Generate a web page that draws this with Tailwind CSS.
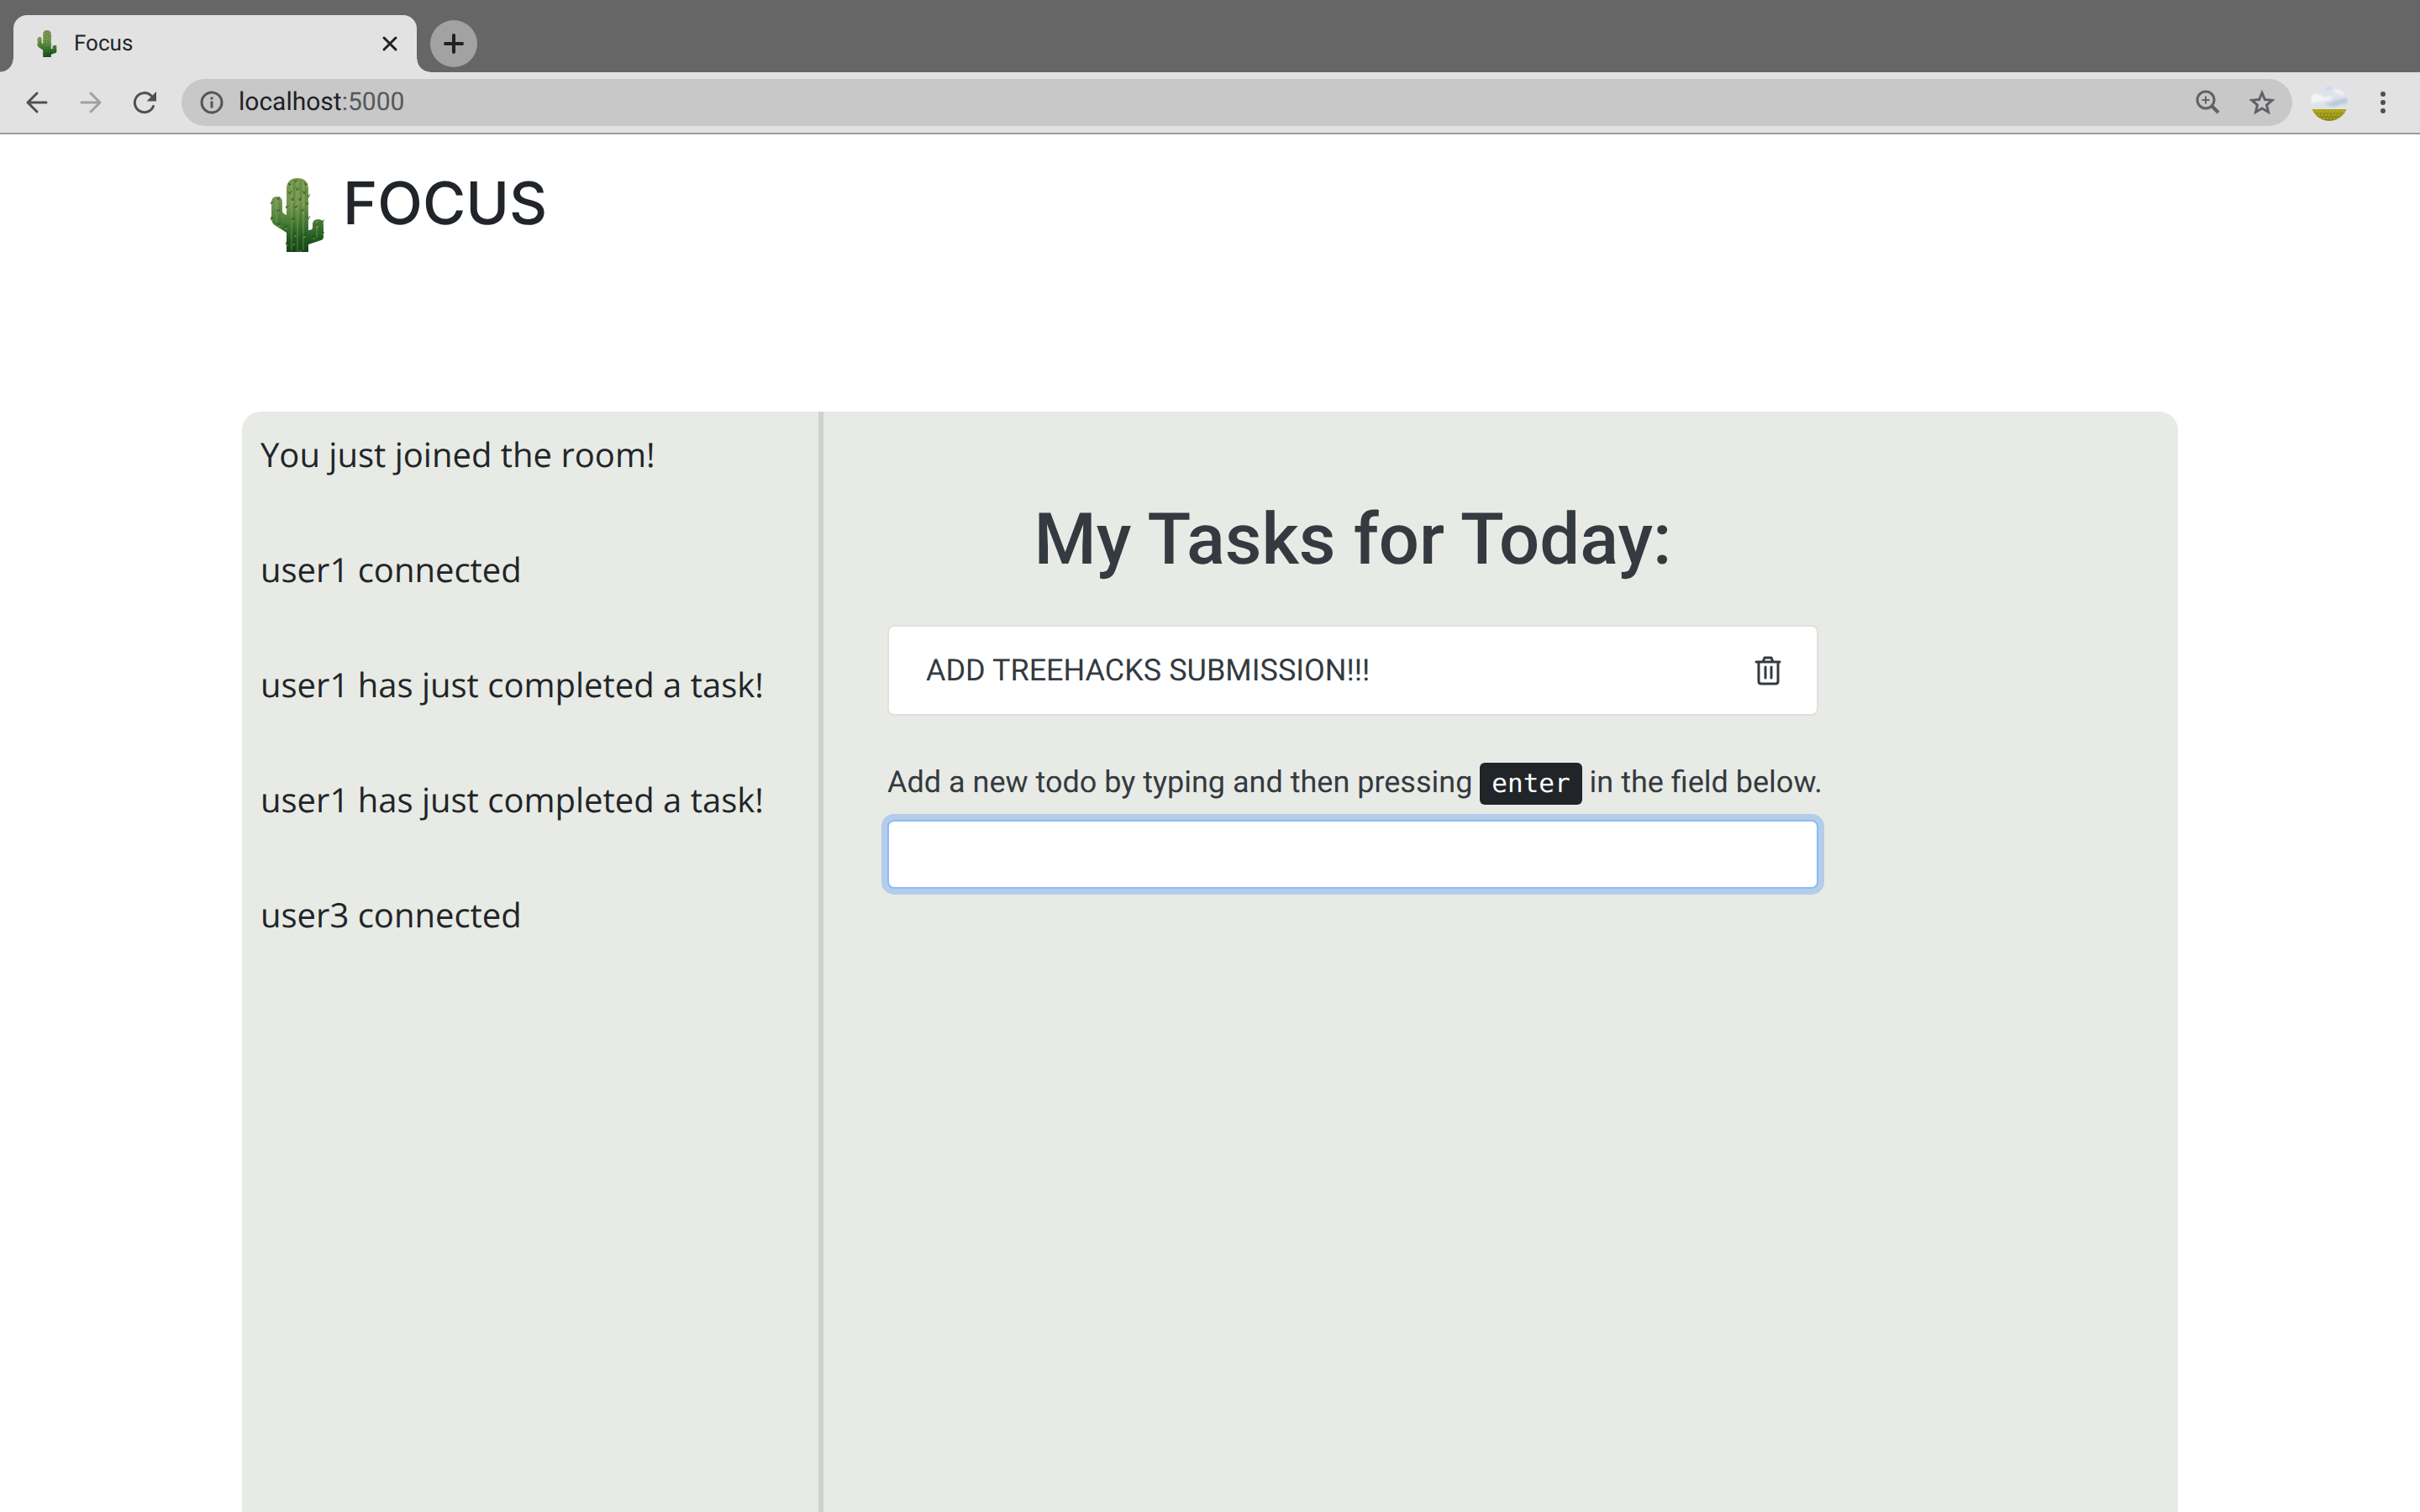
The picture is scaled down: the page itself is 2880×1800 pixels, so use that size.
<!DOCTYPE html>
<html lang="en">
<head>
    <meta charset="UTF-8">
    <meta name="viewport" content="width=device-width, initial-scale=1.0">
    <title>Focus</title>
    <script src="https://cdn.jsdelivr.net/npm/@tailwindcss/browser@4"></script>
</head>
<body class="min-h-screen flex flex-col bg-white text-[#212529] font-['Roboto',sans-serif] [text-rendering:geometricPrecision]">
    <!-- Shared cactus artwork -->
    <svg class="absolute w-0 h-0" aria-hidden="true">
        <defs>
            <linearGradient id="skin" x1="0" y1="0" x2="0" y2="88" gradientUnits="userSpaceOnUse">
                <stop offset="0" stop-color="#75984f"/>
                <stop offset=".35" stop-color="#729650"/>
                <stop offset=".6" stop-color="#477c37"/>
                <stop offset=".82" stop-color="#205a20"/>
                <stop offset="1" stop-color="#17431a"/>
            </linearGradient>
            <symbol id="cactus" viewBox="0 0 64 88">
                <path fill="url(#skin)" d="M19 88V65L5 56Q1 53 1 48V29Q1 22 7.500 22T14 29V39Q14 42 19 44V12Q20 0 32 0T45 12V62Q50 62 50 59V55Q50 49 56.500 49T63 55V70Q63 73 60 74L45 79V88Z"/>
                <path fill="none" stroke="#a9bf72" stroke-opacity=".3" stroke-width="1.500" d="M25 4V86M32 2V88M39 4V86M7 24V52M55 51V71"/>
                <path fill="none" stroke="#1c4a1c" stroke-opacity=".2" stroke-width="1.500" d="M28 3V88M36 3V88M42 8V88M11 26V56M59 52V72"/>
                <path fill="none" stroke="#24481f" stroke-opacity=".75" stroke-width="1" d="M21 6l2 3l1-3M28 2l2 3l2-3M40 5l2 4l2-3M30 11l2 4l2-4M21 16l2 3l2-4M38 15l2 4l2-4M44 19l1 4l2-4M24 24l2 3l1-4M33 24l2 3l1-4M18 33l1 3l2-3M28 33l2 3l2-4M42 29l2 3l1-3M25 47l2 4l1-4M36 37l2 3l2-4M44 45l1 4l2-4M27 65l2 3l1-4M38 66l2 3l2-4M25 75l2 4l1-4M33 84l2 3l1-3M18 76l1 4l1-3M7 23l2 3l2-4M0 28l1 3l2-3M7 37l2 4l2-4M0 46l1 4l1-4M8 53l2 3l2-3M17 56l1 4l2-4M53 54l2 3l2-4M61 50l1 3l2-4M62 64v3l2-3M50 68l1 4l2-4M43 74l2 4l2-4"/>
                <path fill="none" stroke="#b6bd32" stroke-width="1" stroke-linecap="round" d="M23 10h1M42 10h1M32 16h1M26 28h1M35 28h1M30 37h1M38 41h1M27 51h1M45 49h1M29 69h1M40 70h1M27 79h1M35 87h1M9 41h1M1 50h1M10 57h1M18 60h1M55 58h1M62 67h1M51 72h1M1 32h1M19 80h1M19 37h1M44 33h1"/>
            </symbol>
        </defs>
    </svg>

    <!-- Tab strip -->
    <div class="h-[86px] bg-[#666666] flex items-end">
        <div class="w-4 h-4 bg-[radial-gradient(circle_at_top_left,#666666_15px,#e2e2e2_16px)]"></div>
        <div class="w-[480px] h-[68px] rounded-t-2xl bg-[#e2e2e2] flex items-center pl-7 pr-5">
            <svg class="w-6 h-8 mr-5"><use href="#cactus"/></svg>
            <span class="flex-1 text-[26px] leading-8">Focus</span>
            <button class="w-6 h-6" aria-label="Close tab">
                <svg viewBox="0 0 24 24" fill="none" stroke="#202124" stroke-width="3" stroke-linecap="round"><path d="M5 5l14 14M19 5L5 19"/></svg>
            </button>
        </div>
        <div class="w-4 h-4 bg-[radial-gradient(circle_at_top_right,#666666_15px,#e2e2e2_16px)]"></div>
        <button class="w-14 h-14 mb-[6px] rounded-full bg-[#a2a2a2] flex items-center justify-center" aria-label="New tab">
            <svg class="w-6 h-6" viewBox="0 0 24 24" fill="none" stroke="#202020" stroke-width="4" stroke-linecap="round"><path d="M12 2v20M2 12h20"/></svg>
        </button>
    </div>

    <!-- Toolbar -->
    <div class="h-[74px] bg-[#e2e2e2] border-b-2 border-[#9b9b9b] flex items-center pl-[30px] pr-[38px]">
        <button class="w-7 h-7 mr-9" aria-label="Back">
            <svg viewBox="0 0 28 28" fill="none" stroke="#505050" stroke-width="3" stroke-linecap="round" stroke-linejoin="round"><path d="M25 14H3M14 3L3 14l11 11"/></svg>
        </button>
        <button class="w-7 h-7 mr-9" aria-label="Forward">
            <svg viewBox="0 0 28 28" fill="none" stroke="#a0a0a0" stroke-width="3" stroke-linecap="round" stroke-linejoin="round"><path d="M3 14h22M14 3l11 11l-11 11"/></svg>
        </button>
        <button class="w-7 h-7 mr-[30px]" aria-label="Reload">
            <svg viewBox="0 0 28 28" fill="none" stroke="#505050" stroke-width="3" stroke-linecap="round"><path d="M24.500 18.500A11.500 11.500 0 1 1 22 6"/><path fill="#505050" stroke="none" d="M28 1v11.500H16.500z"/></svg>
        </button>
        <div class="flex-1 h-14 rounded-full bg-[#c8c8c8] flex items-center pl-[22px] pr-5">
            <svg class="w-7 h-7 mr-[18px]" viewBox="0 0 28 28" fill="none" stroke="#54565a" stroke-width="3"><circle cx="14" cy="14" r="12"/><path d="M14 12.500v8M14 7.500v3"/></svg>
            <p class="flex-1 text-[30px] leading-10 text-[#202124]">localhost<span class="text-[#55575b]">:5000</span></p>
            <button class="w-8 h-8 mr-8" aria-label="Zoom">
                <svg viewBox="0 0 32 32" fill="none" stroke="#606265" stroke-width="3"><circle cx="13" cy="13" r="10"/><path stroke-width="4" d="M20 20l8 8"/><path stroke-width="2" d="M13 8.500v9M8.500 13h9"/></svg>
            </button>
            <button class="w-8 h-8" aria-label="Bookmark">
                <svg viewBox="0 0 32 32" fill="none" stroke="#606265" stroke-width="3"><path d="M16 4.500l3.400 8l8.600.8l-6.500 5.700l2 8.500L16 23l-7.500 4.500l2-8.500L4 13.300l8.600-.8z"/></svg>
            </button>
        </div>
        <!-- Profile picture -->
        <button class="w-11 h-11 ml-[22px] mr-9 rounded-full overflow-hidden" aria-label="Profile">
            <svg viewBox="0 0 44 44">
                <defs>
                    <linearGradient id="sky" x1="0" y1="0" x2="0" y2="1"><stop offset="0" stop-color="#dfe2ea"/><stop offset=".6" stop-color="#dde3ea"/><stop offset="1" stop-color="#dbe5ec"/></linearGradient>
                    <linearGradient id="field" x1="0" y1="0" x2="0" y2="1"><stop offset="0" stop-color="#b3a516"/><stop offset="1" stop-color="#7f8420"/></linearGradient>
                    <filter id="haze"><feGaussianBlur stdDeviation="1.500"/></filter>
                </defs>
                <path fill="url(#sky)" d="M0 0h44v31H0z"/>
                <g filter="url(#haze)">
                    <path fill="#b9c9d8" d="M16 24q8-2 12-4t16-3v6q-8 0-12 3t-16-2zM17 5q5-1 9 0q-4 3-9 0z"/>
                    <path fill="#f5f5f6" d="M0 13q8-3 13 1t11 0q4 3-3 5T0 23zM26 8q8-3 15 4q-5 3-15-4z"/>
                </g>
                <path fill="url(#field)" d="M0 30h44v14H0z"/>
                <path stroke="#d0ba1e" stroke-width="1" stroke-dasharray="2 2" d="M2 33h40M5 37h34M11 41h22"/>
                <path stroke="#657a25" stroke-width="1" stroke-dasharray="1 3" d="M3 35h38M8 39h28"/>
            </svg>
        </button>
        <button class="w-3 h-7" aria-label="Menu">
            <svg viewBox="0 0 12 28" fill="#505050"><circle cx="6" cy="4" r="3"/><circle cx="6" cy="14" r="3"/><circle cx="6" cy="24" r="3"/></svg>
        </button>
    </div>

    <main class="flex-1 flex flex-col w-4/5 mx-auto">
        <header class="flex items-start pt-[52px] pl-[34px] mb-[190px]">
            <svg class="w-16 h-[88px] mr-[22px]"><use href="#cactus"/></svg>
            <h1 class="text-[70px] leading-[60px] font-medium font-['Inter',sans-serif]">FOCUS</h1>
        </header>

        <div class="flex-1 flex rounded-t-[22px] bg-[#e8eae5]">
            <!-- Room activity -->
            <div class="w-[692px] border-r-6 border-[#cfd1cc] px-[22px] pt-[22px] text-[40px] leading-[57px] font-['Open_Sans',sans-serif] space-y-20">
                <p>You just joined the room!</p>
                <p>user1 connected</p>
                <p>user1 has just completed a task!</p>
                <p>user1 has just completed a task!</p>
                <p>user3 connected</p>
            </div>

            <!-- Todo list -->
            <div class="flex-1 pl-[76px] pr-6 pt-[96px] text-[36px] leading-[54px] text-[#343a40]">
                <div class="max-w-[1108px]">
                    <h2 class="text-[85px] leading-[112px] font-medium text-center mb-[46px]">My Tasks for Today:</h2>
                    <ul class="mb-[52px]">
                        <li class="flex items-center justify-between h-[108px] pl-11 pr-10 bg-white border-2 border-[#dfe0e0] rounded-lg">
                            <span>ADD TREEHACKS SUBMISSION!!!</span>
                            <button class="w-9 h-9" aria-label="Delete task">
                                <svg viewBox="0 0 36 36" fill="none" stroke="#343a40" stroke-width="3" stroke-linecap="round" stroke-linejoin="round"><path d="M4 8h28M12 8l2-5h8l2 5M7 8v23q0 3 3 3h17q3 0 3-3V8M15 14v13M22 14v13"/></svg>
                            </button>
                        </li>
                    </ul>
                    <label for="todo" class="block mb-4 whitespace-nowrap">Add a new todo by typing and then pressing <kbd class="rounded-md bg-[#212529] text-white px-[14px] py-[7px] text-[31px] font-['DejaVu_Sans_Mono',monospace]">enter</kbd> in the field below.</label>
                    <input id="todo" type="text" class="block w-full h-[82px] px-6 bg-white border-2 border-[#8abbfb] rounded-lg ring-7 ring-[#b4cde8] outline-none">
                </div>
            </div>
        </div>
    </main>
</body>
</html>
